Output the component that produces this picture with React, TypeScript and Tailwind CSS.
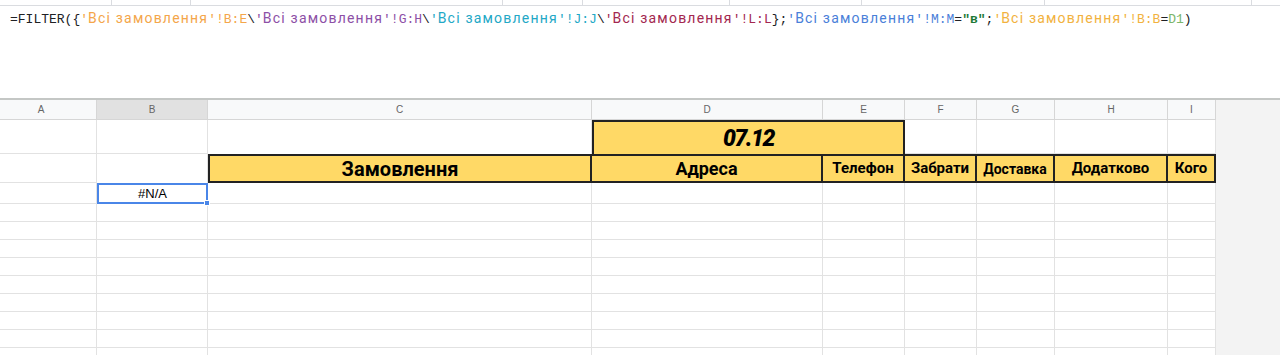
import React from 'react'

const mono = { fontFamily: '"Liberation Mono", "DejaVu Sans Mono", monospace' }
const heading = { fontFamily: 'Roboto, "Liberation Sans", sans-serif' }

type Seg = { t: string; c?: string; cyr?: boolean; b?: boolean }

const sheet = (color: string, range: string): Seg[] => [
  { t: "'", c: color },
  { t: 'Всі замовлення', c: color, cyr: true },
  { t: "'!" + range, c: color },
]

const formula: Seg[] = [
  { t: '=FILTER({' },
  ...sheet('text-[#f4a64a]', 'B:E'),
  { t: '\\' },
  ...sheet('text-[#8d4fa6]', 'G:H'),
  { t: '\\' },
  ...sheet('text-[#23a8c6]', 'J:J'),
  { t: '\\' },
  ...sheet('text-[#a3274f]', 'L:L'),
  { t: '};' },
  ...sheet('text-[#4a80d9]', 'M:M'),
  { t: '=' },
  { t: '"в"', c: 'text-[#1d7a36]', b: true },
  { t: ';' },
  ...sheet('text-[#f2b23e]', 'B:B'),
  { t: '=' },
  { t: 'D1', c: 'text-[#7cb66b]' },
  { t: ')' },
]

const cols = ['A', 'B', 'C', 'D', 'E', 'F', 'G', 'H', 'I']
const topLines = [112, 79, 312, 80, 147, 132, 183, 207]

const titles: { label: string; size: string }[] = [
  { label: 'Адреса', size: 'text-[18px]' },
  { label: 'Телефон', size: 'text-[15px]' },
  { label: 'Забрати', size: 'text-[15px]' },
  { label: 'Доставка', size: 'text-[14px]' },
  { label: 'Додатково', size: 'text-[15px]' },
  { label: 'Кого', size: 'text-[15px]' },
]

export default function App() {
  const emptyRows = Array.from({ length: 9 })
  return (
    <div className="h-[355px] w-[1280px] overflow-hidden bg-white">
      {/* strip of the toolbar above */}
      <div className="flex h-[6px] border-b border-[#dadce0]">
        {topLines.map((w, i) => (
          <div key={i} className="h-full border-r border-[#dadce0]" style={{ width: w }} />
        ))}
      </div>

      {/* formula bar */}
      <div className="h-[92px] whitespace-nowrap pl-[10px] pt-[3px] text-[13px] leading-[18px] text-[#202124]" style={mono}>
        {formula.map((s, i) => (
          <span key={i}
            className={`${s.c ?? ''} ${s.b ? 'font-bold' : ''} ${s.cyr ? 'text-[14px] tracking-[1.2px]' : ''}`}
            style={s.cyr ? { fontFamily: 'Roboto, "Noto Sans", sans-serif' } : undefined}>
            {s.t}
          </span>
        ))}
      </div>

      {/* sheet grid */}
      <div className="border-t-2 border-[#c4c7c5] bg-[#f3f3f3]">
        <div className="grid w-[1216px] grid-cols-[97px_111px_384px_231px_82px_72px_78px_113px_48px] bg-white"
          style={{ fontFamily: '"Liberation Sans", Arial, sans-serif' }}>
          {/* column letters */}
          {cols.map(c => (
            <div key={c}
              className={`flex h-[20px] items-center justify-center border-b border-r border-[#d6d6d6] text-[10px] leading-none text-[#666] ${c === 'A' ? 'pr-[14px]' : ''} ${c === 'B' ? 'bg-[#e1e1e1] text-[#333]' : 'bg-[#f8f9fa]'}`}>
              {c}
            </div>
          ))}

          {/* row 1 */}
          <div className="h-[34px] border-b border-r border-[#e2e2e2]" />
          <div className="border-b border-r border-[#e2e2e2]" />
          <div className="border-r border-[#e2e2e2]" />
          <div className="col-span-2 flex h-[34px] items-center justify-center border-2 border-b-0 border-[#222] bg-[#ffd966] text-[23px] font-black italic leading-none tracking-[-1.5px] text-black"
            style={heading}>
            07.12
          </div>
          <div className="border-b border-r border-[#e2e2e2]" />
          <div className="border-b border-r border-[#e2e2e2]" />
          <div className="border-b border-r border-[#e2e2e2]" />
          <div className="border-b border-r border-[#e2e2e2]" />

          {/* row 2 */}
          <div className="h-[29px] border-b border-r border-[#e2e2e2]" />
          <div className="border-r border-[#e2e2e2]" />
          <div className="flex h-[29px] items-center justify-center border-2 border-[#222] bg-[#ffd966] text-[20px] font-bold leading-none text-black"
            style={heading}>
            Замовлення
          </div>
          {titles.map(t => (
            <div key={t.label}
              className={`flex h-[29px] items-center justify-center border-y-2 border-r-2 border-[#222] bg-[#ffd966] font-bold leading-none text-black ${t.size}`}
              style={heading}>
              {t.label}
            </div>
          ))}

          {/* row 3 with the selected cell */}
          <div className="h-[21px] border-b border-r border-[#e2e2e2]" />
          <div className="relative flex h-[21px] items-center justify-center border-2 border-[#4a86e8] text-[13px] leading-none text-black">
            #N/A
            <span className="absolute -bottom-[4px] -right-[4px] h-[6px] w-[6px] border border-white bg-[#4a86e8]" />
          </div>
          {cols.slice(2).map(c => (
            <div key={c} className="border-b border-r border-[#e2e2e2]" />
          ))}

          {/* empty rows */}
          {emptyRows.map((_, r) =>
            cols.map(c => (
              <div key={`${r}-${c}`} className="h-[18px] border-b border-r border-[#e2e2e2]" />
            ))
          )}
        </div>
      </div>
    </div>
  )
}
